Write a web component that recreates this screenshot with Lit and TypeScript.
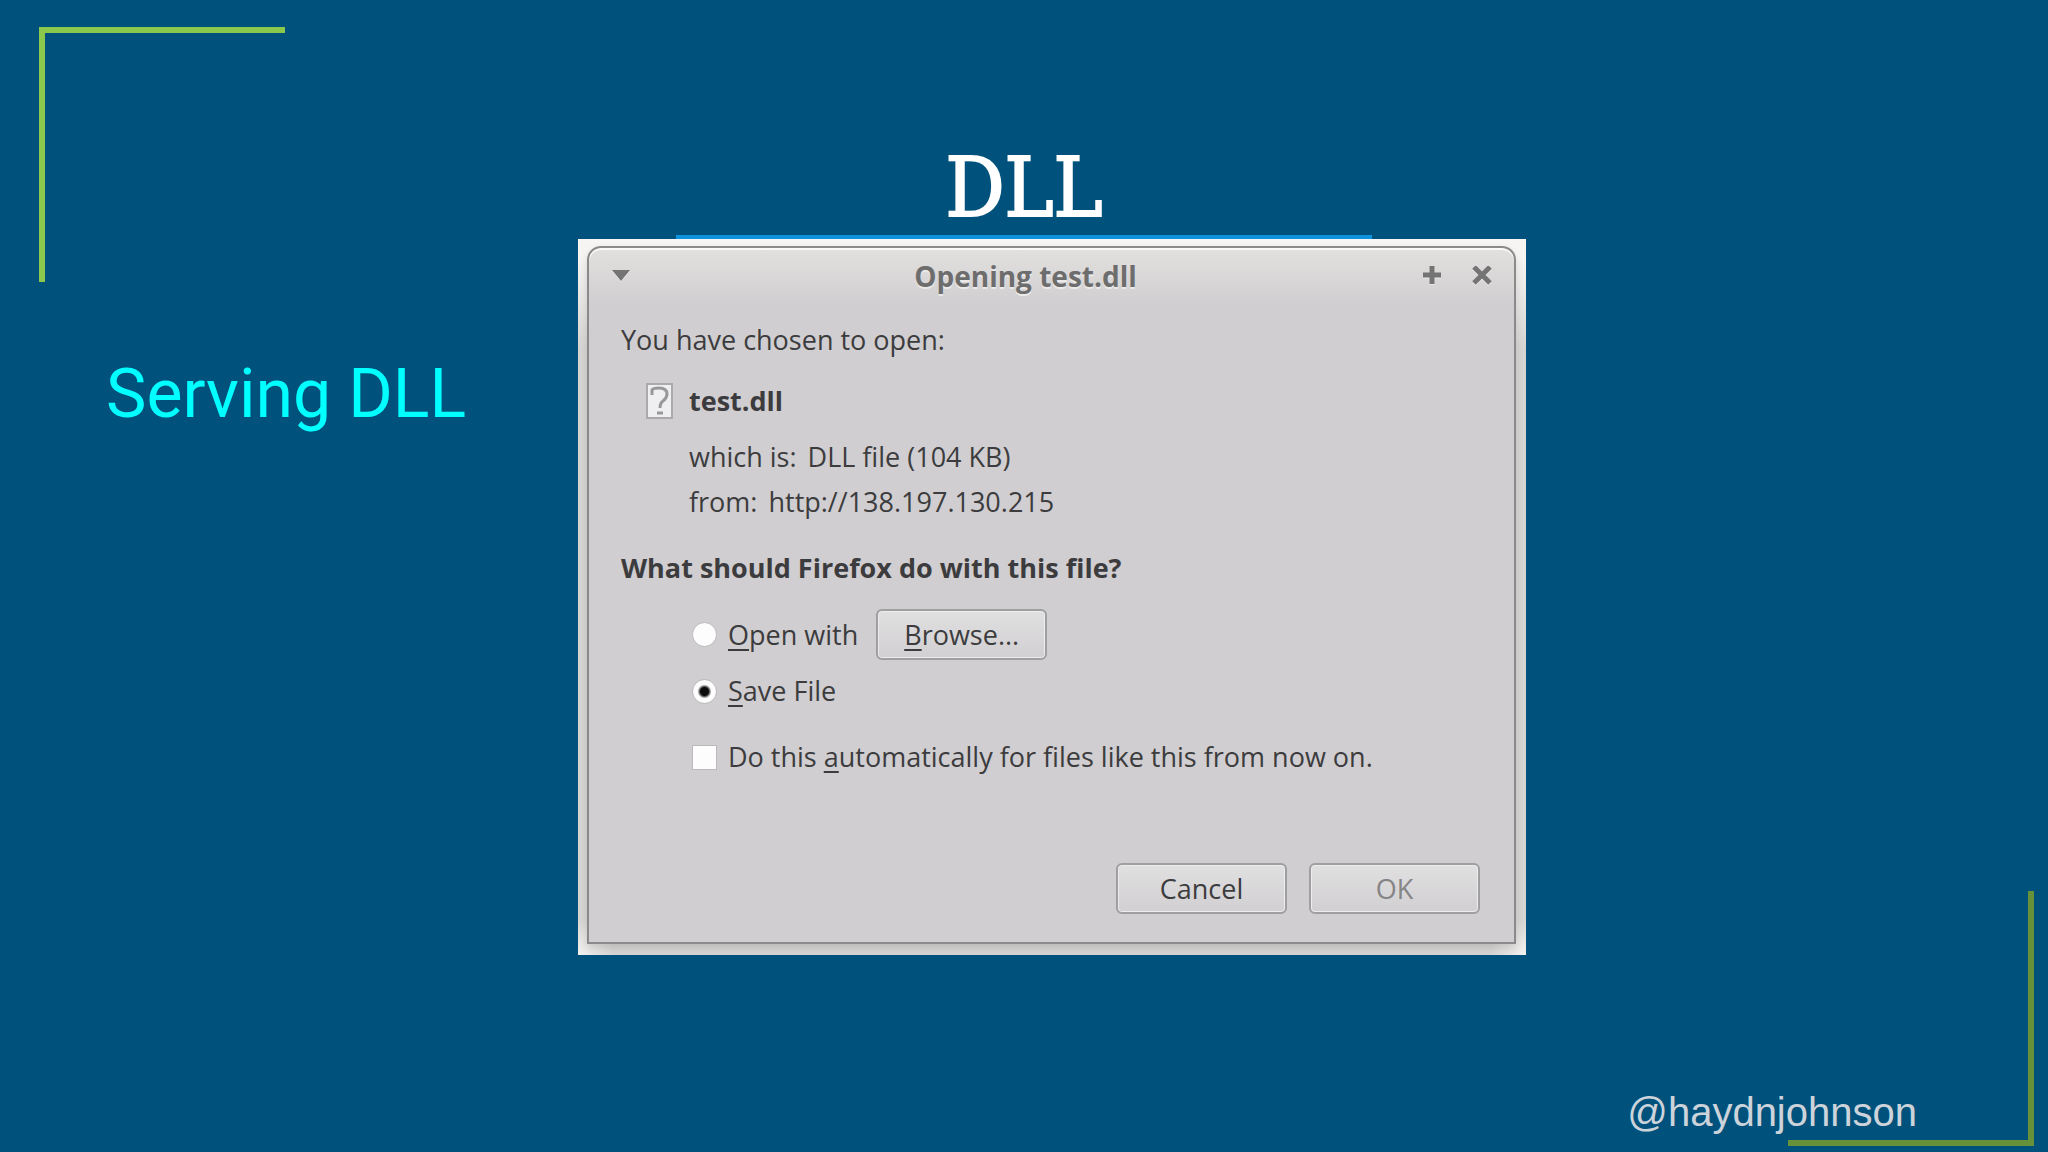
import { LitElement, html, css } from "lit";
import { customElement } from "lit/decorators.js";

@customElement("download-dialog")
class DownloadDialog extends LitElement {
  static styles = css`
    :host {
      display: block;
      box-sizing: border-box;
      padding: 7px 10px 11px 9px;
      background:
        radial-gradient(circle at 0 100%, #f4f2f0, #f4f2f000 36px),
        radial-gradient(circle at 100% 100%, #f4f2f0, #f4f2f000 36px),
        linear-gradient(#f6f5f4 20px, #d6d5d4 110px);
      overflow: hidden;
      font: 27px/36px "Open Sans", "Noto Sans", sans-serif;
      color: #3c3c3e;
    }
    .window {
      display: flex;
      flex-direction: column;
      box-sizing: border-box;
      height: 100%;
      border: 2px solid #8b8a8a;
      border-radius: 14px 14px 0 0;
      background: linear-gradient(#e3e1df, #d0ced0 56px);
      box-shadow: inset 0 2px #f9f9f8, 0 4px 8px #00000020;
    }
    .titlebar {
      display: grid;
      grid-template-columns: 48px 1fr 100px;
      align-items: center;
      height: 55px;
      padding: 0 22px;
    }
    .title {
      margin: 0;
      font-size: 28px;
      line-height: 36px;
      text-align: center;
      color: #6e6d6d;
      text-shadow: 0 2px #ebeae9;
    }
    .tools {
      display: flex;
      justify-content: flex-end;
      gap: 30px;
    }
    .tool {
      display: flex;
      padding: 0;
      border: 0;
      background: none;
      color: #757474;
      filter: drop-shadow(0 1px #ebeae9);
    }
    .tool svg {
      display: block;
      width: 20px;
      height: 20px;
    }
    .body {
      display: flex;
      flex-direction: column;
      flex: 1;
      padding: 19px 34px 28px 32px;
    }
    p,
    h3,
    fieldset {
      margin: 0;
      padding: 0;
      border: 0;
    }
    .file {
      display: flex;
      align-items: center;
      gap: 16px;
      margin: 25px 0 20px 25px;
      font-weight: 700;
    }
    .file svg {
      width: 27px;
      height: 36px;
    }
    .facts {
      display: flex;
      flex-direction: column;
      gap: 9px;
      margin-left: 68px;
    }
    .fact {
      display: flex;
      gap: 11px;
    }
    .question {
      margin-top: 30px;
      font-size: 27px;
      line-height: 36px;
    }
    .choices {
      display: flex;
      flex-direction: column;
      gap: 13px;
      margin: 23px 0 0 71px;
    }
    .choice {
      display: flex;
      align-items: center;
    }
    label {
      display: flex;
      align-items: center;
      gap: 11px;
      white-space: pre;
    }
    u {
      text-decoration-thickness: 2px;
      text-underline-offset: 4px;
      text-decoration-skip-ink: none;
    }
    input {
      appearance: none;
      box-sizing: border-box;
      width: 25px;
      height: 25px;
      margin: 0;
      border: 1px solid #bbb9bb;
      background: #fdfdfe;
    }
    input[type="radio"] {
      border-radius: 50%;
    }
    input[type="radio"]:checked {
      background: radial-gradient(circle, #0c0c0c 4px, #fdfdfe 7px);
    }
    .auto {
      margin: 30px 0 0 71px;
    }
    .push {
      box-sizing: border-box;
      width: 171px;
      height: 51px;
      padding: 0;
      border: 2px solid #9f9ea0;
      border-radius: 6px;
      background: linear-gradient(#e1e0e1, #d1cfd1);
      box-shadow: inset 0 0 0 1px #ececec;
      font: inherit;
      color: inherit;
    }
    .push:disabled {
      color: #858486;
    }
    .browse {
      margin-left: 18px;
    }
    .actions {
      display: flex;
      justify-content: flex-end;
      gap: 22px;
      margin-top: auto;
    }
  `;

  render() {
    return html`
      <section class="window" role="dialog" aria-labelledby="title">
        <header class="titlebar">
          <button class="tool" aria-label="Window menu">
            <svg viewBox="0 0 20 20"><path d="M1 4H19L10 15Z" fill="currentColor" /></svg>
          </button>
          <h2 class="title" id="title">Opening test.dll</h2>
          <div class="tools">
            <button class="tool" aria-label="Maximize">
              <svg viewBox="0 0 20 20"><path d="M10 0V18M1 9H19" stroke="currentColor" stroke-width="5" /></svg>
            </button>
            <button class="tool" aria-label="Close">
              <svg viewBox="0 0 20 20"><path d="M2 1L18 17M18 1L2 17" stroke="currentColor" stroke-width="5" /></svg>
            </button>
          </div>
        </header>
        <div class="body">
          <p>You have chosen to open:</p>
          <div class="file">
            <svg viewBox="0 0 27 36" fill="none" aria-hidden="true">
              <rect x="1" y="1" width="25" height="34" fill="#efeff1" stroke="#aaa9ab" stroke-width="2" />
              <path d="M6 12V7Q7 5 13 5Q21 5 21 11Q21 15 17 18Q14 20 14 25" stroke="#98979a" stroke-width="3" />
              <path d="M11 30H17" stroke="#98979a" stroke-width="3" />
            </svg>
            <span>test.dll</span>
          </div>
          <div class="facts">
            <div class="fact"><span>which is:</span><span>DLL file (104 KB)</span></div>
            <div class="fact"><span>from:</span><span>http://138.197.130.215</span></div>
          </div>
          <h3 class="question" id="question">What should Firefox do with this file?</h3>
          <fieldset class="choices" aria-labelledby="question">
            <div class="choice">
              <label><input type="radio" name="action" /><span><u>O</u>pen with</span></label>
              <button class="push browse"><u>B</u>rowse...</button>
            </div>
            <div class="choice">
              <label><input type="radio" name="action" checked /><span><u>S</u>ave File</span></label>
            </div>
          </fieldset>
          <label class="auto"
            ><input type="checkbox" /><span>Do this <u>a</u>utomatically for files like this from now on.</span></label
          >
          <div class="actions">
            <button class="push">Cancel</button>
            <button class="push" disabled>OK</button>
          </div>
        </div>
      </section>
    `;
  }
}

@customElement("app-root")
class AppRoot extends LitElement {
  static styles = css`
    :host {
      display: block;
    }
    .slide {
      position: relative;
      display: flex;
      flex-direction: column;
      box-sizing: border-box;
      min-height: 100vh;
      padding-top: 140px;
      background: #00527c;
      overflow: hidden;
    }
    .corner {
      position: absolute;
      box-sizing: border-box;
      width: 246px;
      height: 255px;
    }
    .corner.start {
      top: 27px;
      left: 39px;
      border-top: 6px solid #8bc94d;
      border-left: 6px solid #8bc94d;
    }
    .corner.end {
      right: 14px;
      bottom: 6px;
      border-right: 6px solid #67923a;
      border-bottom: 6px solid #67923a;
    }
    .heading {
      align-self: center;
      box-sizing: border-box;
      width: 34%;
      margin: 0;
      border-bottom: 4px solid #0d92de;
      font: 400 82px/95px "Roboto Slab", "DejaVu Serif Condensed", "DejaVu Serif", serif;
      text-align: center;
      color: #fff;
      -webkit-text-stroke: 2px #fff;
    }
    .content {
      display: grid;
      grid-template-columns: 578fr 948fr 522fr;
      align-items: start;
    }
    .topic {
      margin: 115px 0 0 106px;
      font: 400 68px/80px Roboto, sans-serif;
      color: #00ffff;
      white-space: nowrap;
    }
    download-dialog {
      min-height: 716px;
      display: grid;
    }
    .handle {
      align-self: flex-end;
      margin: auto 131px 16px 0;
      font: 40px/48px "Liberation Sans", Arial, sans-serif;
      color: #cdd3da;
    }
  `;

  render() {
    return html`
      <main class="slide">
        <div class="corner start"></div>
        <div class="corner end"></div>
        <h1 class="heading">DLL</h1>
        <div class="content">
          <h2 class="topic">Serving DLL</h2>
          <download-dialog></download-dialog>
        </div>
        <p class="handle">@haydnjohnson</p>
      </main>
    `;
  }
}
